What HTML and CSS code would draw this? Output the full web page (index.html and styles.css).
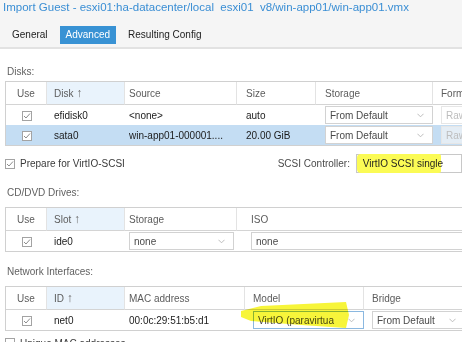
FILE: index.html
```html
<!DOCTYPE html>
<html lang="en">

<head>
  <meta charset="UTF-8" />
  <meta name="viewport" content="width=device-width, initial-scale=1.0" />
  <title>Import Guest</title>
  <link rel="stylesheet" href="styles.css">
</head>

<body>
  <!-- Window Header + Tabs -->
  <div class="head">
    <div class="title">Import Guest - esxi01:ha-datacenter/local&nbsp; esxi01&nbsp; v8/win-app01/win-app01.vmx</div>
    <div class="tabs">
      <span class="tab">General</span>
      <span class="tab active">Advanced</span>
      <span class="tab">Resulting Config</span>
    </div>
  </div>

  <div class="panel">
    <!-- Disks -->
    <div class="label first">Disks:</div>
    <table class="grid disks">
      <colgroup>
        <col class="c-use"><col class="c-key"><col class="c-src"><col class="c-size"><col class="c-store"><col class="c-fmt">
      </colgroup>
      <tr>
        <th class="center">Use</th>
        <th class="sorted">Disk <span class="sort">↑</span></th>
        <th class="p4">Source</th>
        <th class="p9">Size</th>
        <th class="p9">Storage</th>
        <th class="p8">Format</th>
      </tr>
      <tr>
        <td class="center"><svg class="chk" viewBox="0 0 10 10"><rect x="0.5" y="0.5" width="9" height="9" fill="#fff" stroke="#a3a3a3"/><path d="M2 5l2 2 4-4.5" fill="none" stroke="#8c8c8c"/></svg></td>
        <td>efidisk0</td>
        <td class="p4">&lt;none&gt;</td>
        <td class="p9">auto</td>
        <td class="p9"><div class="select"><span>From Default</span><svg class="arrow" viewBox="0 0 8 5"><path d="M0.5 0.5l3.5 3.5 3.5-3.5" fill="none" stroke="#b5b5b5"/></svg></div></td>
        <td class="p8"><div class="select disabled"><span>Raw</span></div></td>
      </tr>
      <tr class="selected">
        <td class="center"><svg class="chk" viewBox="0 0 10 10"><rect x="0.5" y="0.5" width="9" height="9" fill="#fff" stroke="#a3a3a3"/><path d="M2 5l2 2 4-4.5" fill="none" stroke="#8c8c8c"/></svg></td>
        <td>sata0</td>
        <td class="p4">win-app01-000001....</td>
        <td class="p9">20.00 GiB</td>
        <td class="p9"><div class="select"><span>From Default</span><svg class="arrow" viewBox="0 0 8 5"><path d="M0.5 0.5l3.5 3.5 3.5-3.5" fill="none" stroke="#b5b5b5"/></svg></div></td>
        <td class="p8"><div class="select disabled"><span>Raw</span></div></td>
      </tr>
    </table>

    <!-- VirtIO-SCSI -->
    <div class="options">
      <label class="check"><svg class="chk" viewBox="0 0 10 10"><rect x="0.5" y="0.5" width="9" height="9" fill="#fff" stroke="#a3a3a3"/><path d="M2 5l2 2 4-4.5" fill="none" stroke="#8c8c8c"/></svg>Prepare for VirtIO-SCSI</label>
      <span class="field-label">SCSI Controller:</span>
      <div class="combo">
        <span class="marker"></span>
        <span class="combo-text">VirtIO SCSI single</span>
      </div>
    </div>

    <!-- CD/DVD Drives -->
    <div class="label">CD/DVD Drives:</div>
    <table class="grid cds">
      <colgroup>
        <col class="c-use"><col class="c-key"><col class="c-store"><col class="c-iso">
      </colgroup>
      <tr>
        <th class="center">Use</th>
        <th class="sorted">Slot <span class="sort">↑</span></th>
        <th class="p4">Storage</th>
        <th class="p14">ISO</th>
      </tr>
      <tr>
        <td class="center"><svg class="chk" viewBox="0 0 10 10"><rect x="0.5" y="0.5" width="9" height="9" fill="#fff" stroke="#a3a3a3"/><path d="M2 5l2 2 4-4.5" fill="none" stroke="#8c8c8c"/></svg></td>
        <td>ide0</td>
        <td class="p4 r3"><div class="select"><span>none</span><svg class="arrow" viewBox="0 0 8 5"><path d="M0.5 0.5l3.5 3.5 3.5-3.5" fill="none" stroke="#b5b5b5"/></svg></div></td>
        <td class="p14"><div class="select open"><span>none</span></div></td>
      </tr>
    </table>

    <!-- Network Interfaces -->
    <div class="label">Network Interfaces:</div>
    <table class="grid nets">
      <colgroup>
        <col class="c-use"><col class="c-key"><col class="c-mac"><col class="c-model"><col class="c-bridge">
      </colgroup>
      <tr>
        <th class="center">Use</th>
        <th class="sorted">ID <span class="sort">↑</span></th>
        <th class="p4">MAC address</th>
        <th class="p8">Model</th>
        <th class="p8">Bridge</th>
      </tr>
      <tr>
        <td class="center"><svg class="chk" viewBox="0 0 10 10"><rect x="0.5" y="0.5" width="9" height="9" fill="#fff" stroke="#a3a3a3"/><path d="M2 5l2 2 4-4.5" fill="none" stroke="#8c8c8c"/></svg></td>
        <td>net0</td>
        <td class="p4">00:0c:29:51:b5:d1</td>
        <td class="p8 model">
          <div class="select focus"><span>VirtIO (paravirtua</span><svg class="arrow" viewBox="0 0 8 5"><path d="M0.5 0.5l3.5 3.5 3.5-3.5" fill="none" stroke="#b5b5b5"/></svg></div>
          <!-- highlighter stroke -->
          <svg class="swipe" viewBox="0 0 112 32"><path d="M2 11 L22 6 L107 2 L110 15 L107 28 L62 25 L12 21 L2 17 Z" fill="#f7f53a"/></svg>
        </td>
        <td class="p8 r9"><div class="select"><span>From Default</span><svg class="arrow" viewBox="0 0 8 5"><path d="M0.5 0.5l3.5 3.5 3.5-3.5" fill="none" stroke="#b5b5b5"/></svg></div></td>
      </tr>
    </table>

    <label class="check last"><svg class="chk" viewBox="0 0 10 10"><rect x="0.5" y="0.5" width="9" height="9" fill="#fff" stroke="#a3a3a3"/></svg>Unique MAC addresses</label>
  </div>
</body>

</html>
```

FILE: styles.css
```css
/* General */
* {
  box-sizing: border-box;
}

html,
body {
  margin: 0;
  padding: 0;
}

body {
  width: 462px;
  height: 342px;
  overflow: hidden;
  background-color: #ffffff;
  font-family: "Liberation Sans", Arial, sans-serif;
  font-size: 10px;
  color: #1b1b1b;
}

/* Header */
.head {
  height: 49px;
  background-color: #f5f5f5;
  border-bottom: 2px solid #e2e2e2;
}

.title {
  font-size: 11.5px;
  line-height: 15px;
  color: #3a8ed4;
  padding-left: 3px;
  white-space: nowrap;
}

.tabs {
  display: flex;
  gap: 6px;
  margin-top: 11px;
  padding-left: 6px;
}

.tab {
  height: 18px;
  line-height: 18px;
  padding: 0 6px;
  color: #222;
}

.tab.active {
  background-color: #3892d4;
  color: #ffffff;
}

/* Panel */
.panel {
  padding-left: 5px;
}

.label {
  height: 14px;
  line-height: 14px;
  margin: 13px 0 7px 2px;
  color: #616161;
}

.label.first {
  margin-top: 16px;
  margin-bottom: 2px;
}

/* Grids */
.grid {
  border-collapse: separate;
  border-spacing: 0;
  table-layout: fixed;
  border: 1px solid #d0d0d0;
  border-right: none;
}

.disks { width: 507px; }
.cds { width: 471px; }
.nets { width: 468px; }

.c-use { width: 41px; }
.c-key { width: 78px; }
.c-src { width: 112px; }
.c-size { width: 79px; }
.disks .c-store { width: 117px; }
.c-fmt { width: 80px; }
.cds .c-store { width: 112px; }
.c-iso { width: 240px; }
.c-mac { width: 120px; }
.c-model { width: 119px; }
.c-bridge { width: 110px; }

th {
  height: 23px;
  padding: 0 0 0 7px;
  text-align: left;
  font-weight: normal;
  color: #5c5c5c;
  background-color: #ffffff;
  border-right: 1px solid #e3e3e3;
  border-bottom: 1px solid #d4d4d4;
  white-space: nowrap;
}

th.sorted {
  background-color: #e9f3fc;
}

.sort {
  font-size: 12px;
  color: #6a6a6a;
}

td {
  height: 20px;
  padding: 0 0 0 7px;
  white-space: nowrap;
  overflow: hidden;
}

.selected td {
  background-color: #c4ddf3;
}

th.center,
td.center {
  text-align: center;
  padding: 0;
}

.p4 { padding-left: 4px; }
.p8 { padding-left: 8px; }
.p9 { padding-left: 9px; }
.p14 { padding-left: 14px; }
.r3 { padding-right: 3px; }
.r9 { padding-right: 9px; }

.chk {
  width: 10px;
  height: 10px;
  display: inline-block;
  vertical-align: middle;
}

/* Selects */
.select {
  display: flex;
  align-items: center;
  justify-content: space-between;
  height: 18px;
  padding: 0 8px 0 4px;
  background-color: #ffffff;
  border: 1px solid #d2d2d2;
  color: #4a4a4a;
}

.select.disabled {
  color: #bdbdbd;
  border-color: #e6e6e6;
  width: 60px;
}

.selected .select.disabled {
  background-color: #e4edf5;
}

.select.focus {
  border-color: #8bb8e0;
}

.arrow {
  width: 7px;
  height: 5px;
}

.model {
  position: relative;
  overflow: visible;
}

.swipe {
  position: absolute;
  left: -6px;
  top: -10px;
  width: 112px;
  height: 32px;
  mix-blend-mode: multiply;
  pointer-events: none;
}

/* Option row */
.options {
  display: flex;
  align-items: center;
  height: 19px;
  margin-top: 8px;
}

.check {
  display: flex;
  align-items: center;
  gap: 5px;
  color: #3a3a3a;
  width: 283px;
}

.field-label {
  width: 81px;
  color: #4a4a4a;
}

.combo {
  position: relative;
  width: 110px;
  height: 19px;
  line-height: 17px;
  border: 1px solid #c8c8c8;
  background-color: #ffffff;
  padding-left: 6px;
  white-space: nowrap;
}

.combo-text {
  position: relative;
  color: #1f1f1f;
}

/* highlighter over the combo */
.marker {
  position: absolute;
  left: 0;
  top: -1px;
  width: 84px;
  height: 19px;
  border-radius: 4px 2px 2px 4px;
  background-color: #fbfb55;
}

.check.last {
  margin-top: 3px;
  height: 18px;
}
```
